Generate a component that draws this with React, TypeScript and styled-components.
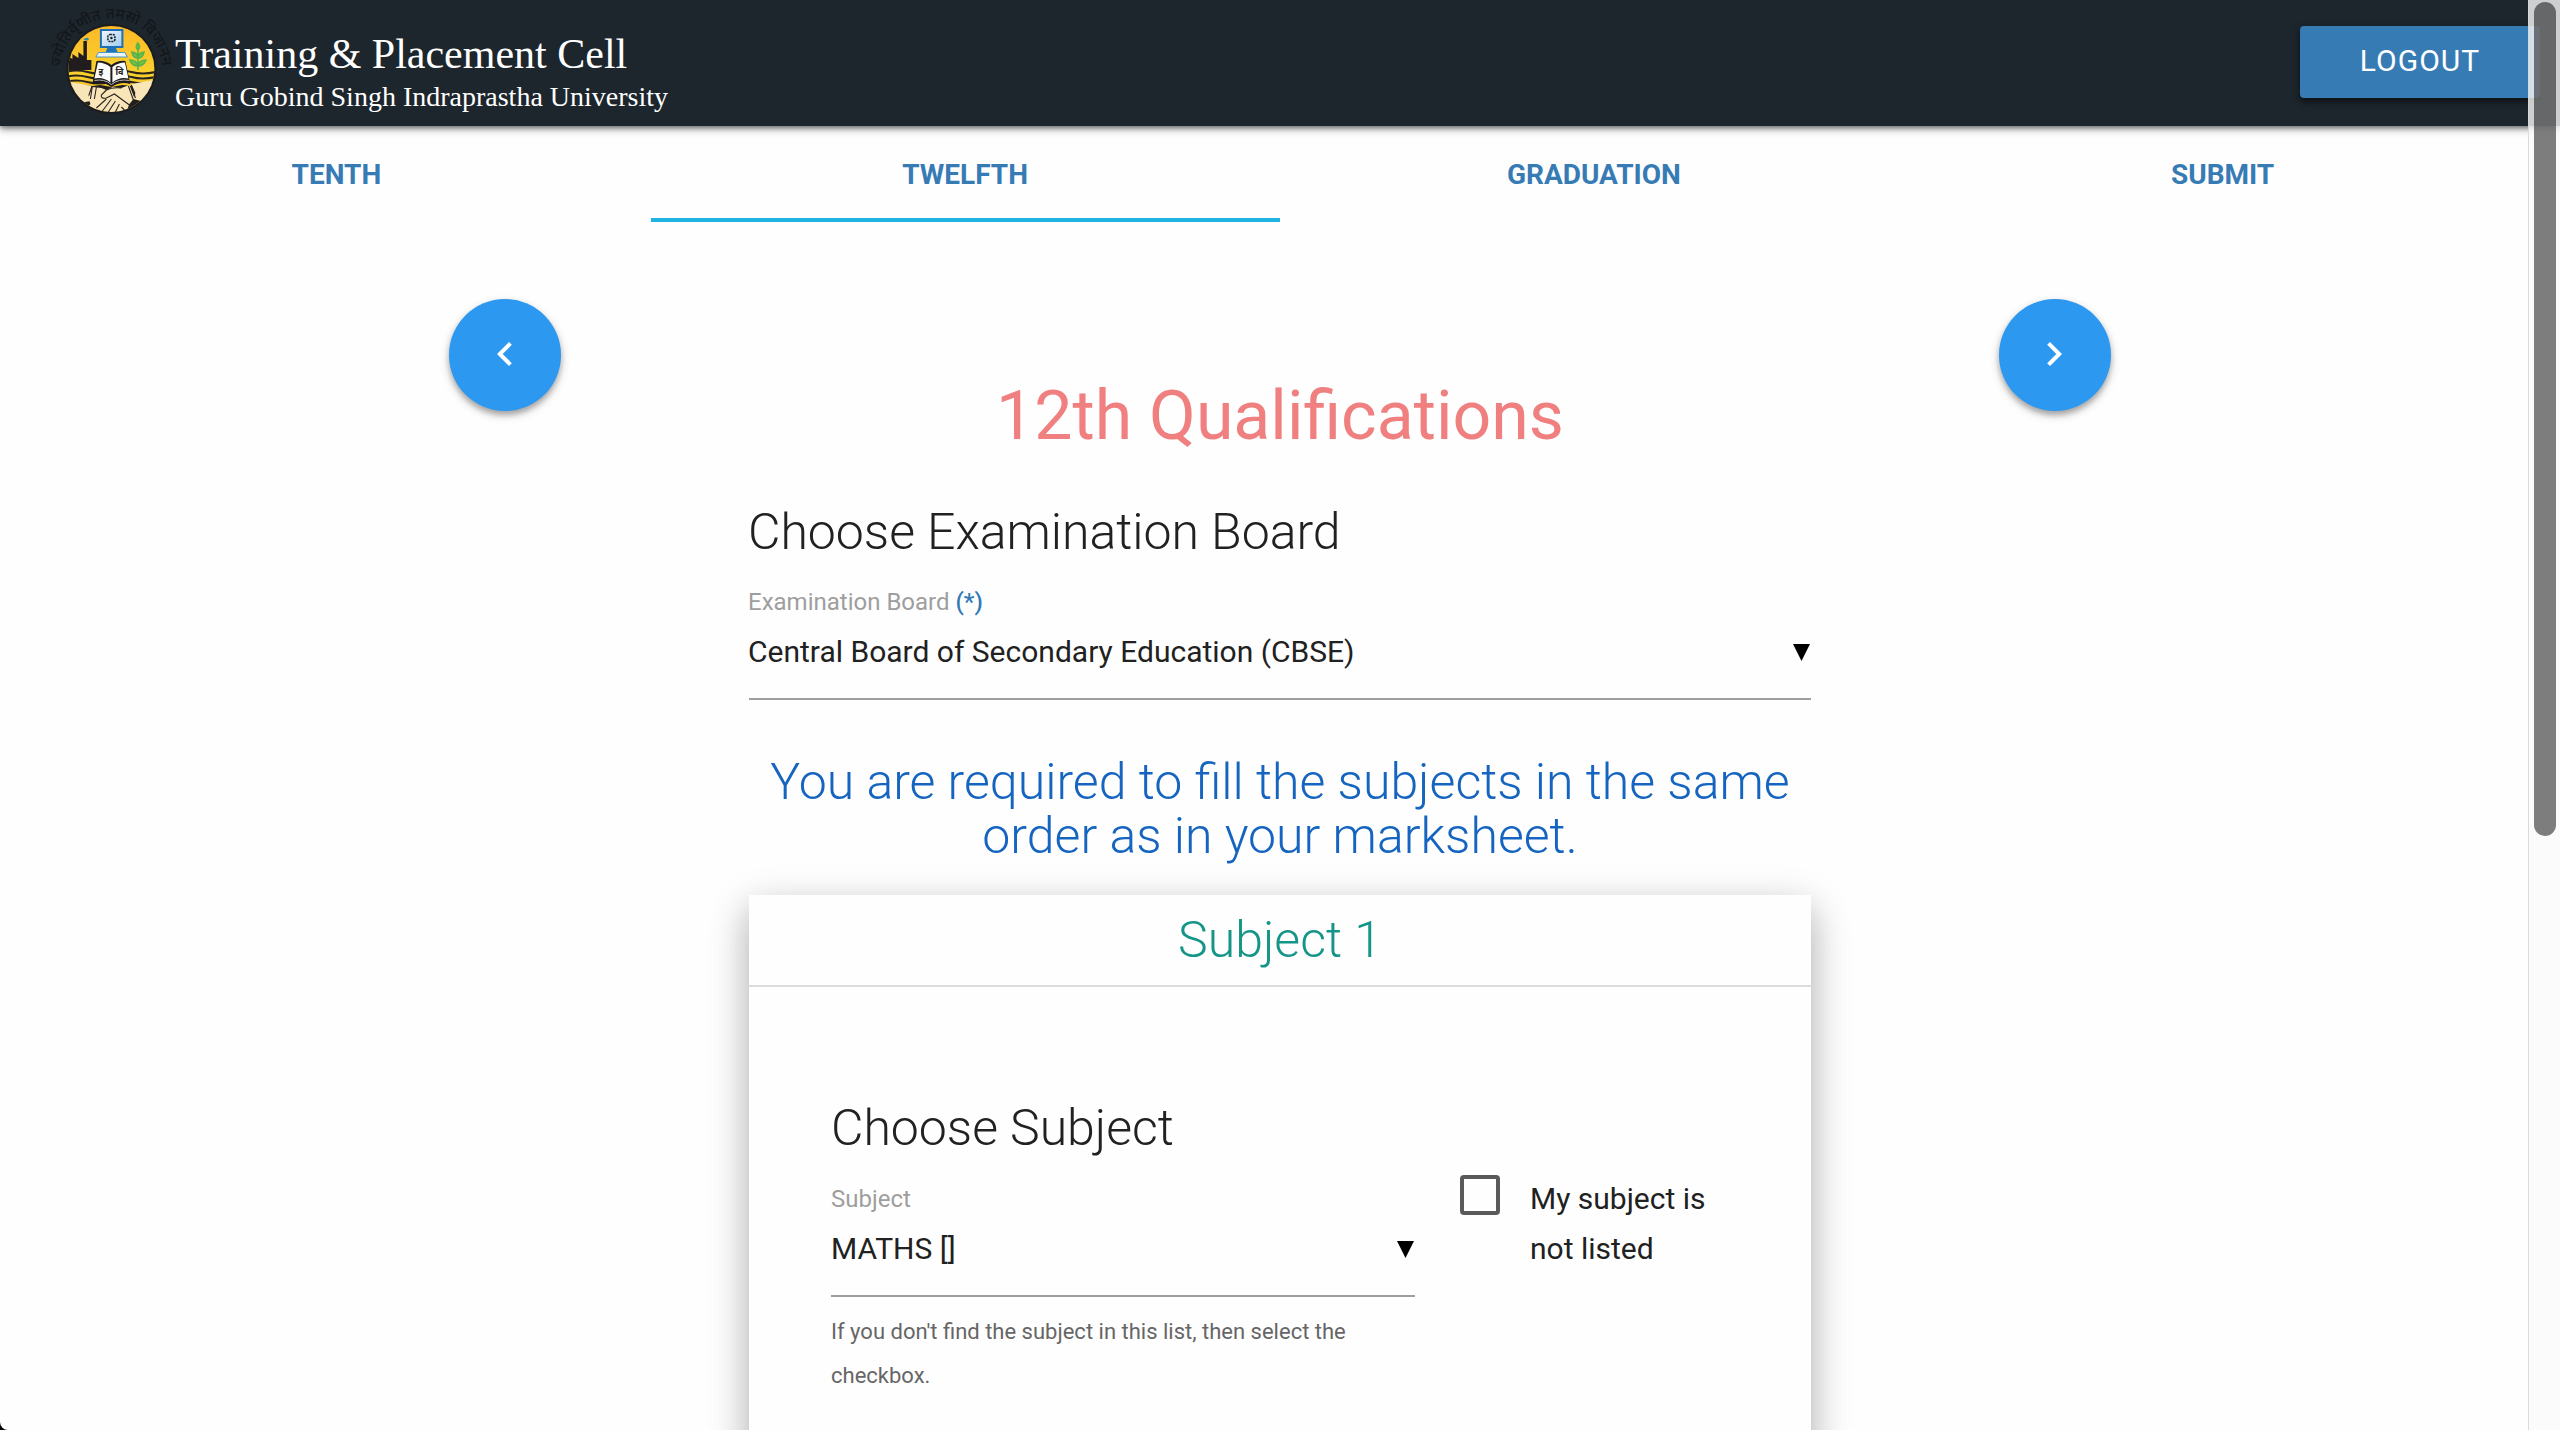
import React from "react";
import styled, { createGlobalStyle, css } from "styled-components";

const GlobalStyle = createGlobalStyle`
  *, *::before, *::after { box-sizing: border-box; }
  html, body { margin: 0; padding: 0; background: #fefefe; }
  body { font-family: Roboto, "Liberation Sans", sans-serif; color: #212121; }
`;

const Page = styled.div`
  position: relative;
  width: 2560px;
  height: 1430px;
  overflow: hidden;
  display: flex;
  flex-direction: column;
  background: #fefefe;
`;

const Header = styled.header`
  position: relative;
  flex: none;
  height: 126px;
  padding: 0 20px 0 50px;
  display: flex;
  align-items: flex-start;
  background: #1d262d;
  box-shadow: 0 3px 8px rgba(0, 0, 0, 0.38), 0 2px 4px rgba(0, 0, 0, 0.3);
`;

const LogoArt = styled.svg`
  flex: none;
  width: 125px;
  height: 126px;
  overflow: visible;
  font-family: "Noto Sans Devanagari", "Noto Sans", sans-serif;
`;

const Brand = styled.div`
  flex: 1;
  padding-top: 31px;
  color: #fff;
  font-family: "Liberation Serif", "Times New Roman", serif;
  white-space: nowrap;
`;

const BrandTitle = styled.div`
  font-size: 42px;
  line-height: 46px;
`;

const BrandSubtitle = styled.div`
  font-size: 28px;
  line-height: 39px;
`;

const LogoutButton = styled.button`
  width: 240px;
  height: 72px;
  margin: 26px 0 0;
  padding: 0 0 2px;
  border: 0;
  border-radius: 4px;
  background: #377bb5;
  color: #fff;
  font: 400 30px/70px Roboto, sans-serif;
  letter-spacing: 1px;
  box-shadow: 0 4px 10px rgba(0, 0, 0, 0.35), 0 3px 4px rgba(0, 0, 0, 0.3);
`;

const Tabs = styled.nav`
  flex: none;
  height: 96px;
  padding: 0 23px 0 22px;
  display: grid;
  grid-template-columns: repeat(4, 1fr);
`;

const Tab = styled.a<{ $active?: boolean }>`
  padding-top: 5px;
  border-bottom: 4px solid ${(p) => (p.$active ? "#1fb3e1" : "transparent")};
  color: #377bb5;
  font-size: 28px;
  font-weight: 700;
  line-height: 87px;
  text-align: center;
`;

const Main = styled.main`
  flex: 1;
  padding: 77px 449px 0;
  display: flex;
  justify-content: space-between;
  align-items: flex-start;
`;

const RoundButton = styled.button<{ $nudge?: number }>`
  flex: none;
  width: 112px;
  height: 112px;
  padding: 0 ${(p) => p.$nudge ?? 0}px 2px 0;
  border: 0;
  border-radius: 50%;
  display: flex;
  align-items: center;
  justify-content: center;
  background: #2c98f0;
  box-shadow: 0 4px 10px rgba(0, 0, 0, 0.24), 0 4px 5px rgba(0, 0, 0, 0.18);

  svg { width: 48px; height: 48px; fill: #fff; }
`;

const Form = styled.section`
  width: 1062px;
  padding-top: 79px;
`;

const PageTitle = styled.h1`
  margin: 0 0 51px;
  color: #f08080;
  font-size: 68px;
  font-weight: 400;
  line-height: 76px;
  text-align: center;
`;

const headingText = css`
  margin: 0;
  font-size: 50px;
  font-weight: 300;
  line-height: 54px;
`;

const SectionTitle = styled.h2<{ $inset?: number }>`
  ${headingText}
  letter-spacing: -0.04px;
  text-indent: ${(p) => p.$inset ?? 0}px;
`;

const Notice = styled.h2`
  ${headingText}
  margin: 55px 0 32px;
  color: #1565c0;
  text-align: center;
`;

const Label = styled.label<{ $inset?: number }>`
  display: block;
  margin: 25px 0 10px;
  color: #9e9e9e;
  font-size: 24px;
  line-height: 36px;
  text-indent: ${(p) => p.$inset ?? 0}px;
`;

const Required = styled.span`
  color: #337ab7;
  font-weight: 500;
`;

const Select = styled.div<{ $inset?: number }>`
  height: 70px;
  padding-right: 1px;
  border-bottom: 2px solid #9e9e9e;
  display: flex;
  justify-content: space-between;
  align-items: flex-start;
  font-size: 30px;
  line-height: 44px;
  text-indent: ${(p) => p.$inset ?? 0}px;

  svg { width: 17px; height: 17px; margin-top: 14px; fill: #000; }
`;

const Card = styled.section`
  height: 700px;
  background: #fefefe;
  box-shadow: 0 16px 34px rgba(0, 0, 0, 0.18), 0 12px 40px rgba(0, 0, 0, 0.17);
`;

const CardTitle = styled.h2`
  ${headingText}
  padding: 18px 0;
  border-bottom: 2px solid #dcdcdc;
  color: #159587;
  text-align: center;
`;

const CardBody = styled.div`
  padding: 114px 82px 0;
`;

const SubjectRow = styled.div`
  display: flex;
  align-items: flex-start;
`;

const SubjectField = styled.div`
  flex: none;
  width: 584px;
  margin-right: 45px;
  padding-top: 1px;
`;

const Hint = styled.p`
  margin: 13px 0 0;
  color: #666;
  font-size: 22px;
  line-height: 44px;
`;

const CheckField = styled.label`
  padding-top: 19px;
  display: flex;
  align-items: flex-start;
  gap: 30px;
  font-size: 30px;
  line-height: 50px;
`;

const CheckBox = styled.span`
  flex: none;
  width: 40px;
  height: 40px;
  margin-top: 1px;
  border: 4px solid #5a5a5a;
  border-radius: 4px;
`;

const CheckText = styled.span`
  width: 190px;
`;

const ScrollTrack = styled.div`
  position: absolute;
  top: 0;
  right: 0;
  width: 32px;
  height: 100%;
  padding: 2px 4px 0 5px;
  border-left: 1px solid rgba(215, 215, 215, 0.9);
  background: rgba(250, 250, 250, 0.8);
`;

const ScrollThumb = styled.div`
  height: 834px;
  border-radius: 11px;
  background: rgba(0, 0, 0, 0.5);
`;

const Corner = styled.svg`
  position: absolute;
  left: 0;
  bottom: 0;
  width: 8px;
  height: 8px;
`;

const Logo = () => (
  <LogoArt viewBox="50.6 0 125 126">
    <defs>
      <clipPath id="disc"><circle cx="112" cy="69" r="43" /></clipPath>
      <path id="motto" d="M61.500 69A50.500 50.500 0 0 1 162.500 69" />
      <linearGradient id="sky" x1="0" y1="0" x2="0" y2="1">
        <stop offset="0" stopColor="#fcb826" />
        <stop offset="0.55" stopColor="#f9d22e" />
        <stop offset="1" stopColor="#e9a91c" />
      </linearGradient>
      <linearGradient id="screen" x1="0" y1="0" x2="1" y2="1">
        <stop offset="0" stopColor="#f4f9fd" />
        <stop offset="1" stopColor="#9dcbee" />
      </linearGradient>
    </defs>
    <g fontSize="15" fontWeight="500" fill="#14161a" textAnchor="middle">
      <text><textPath href="#motto" startOffset="36">ज्योतिर्वृणीत</textPath></text>
      <text><textPath href="#motto" startOffset="90">तमसो</textPath></text>
      <text><textPath href="#motto" startOffset="133">विजानन</textPath></text>
    </g>
    <circle cx="112" cy="69" r="45" fill="#1b1c1e" />
    <g clipPath="url(#disc)">
      <rect x="68" y="25" width="88" height="90" fill="url(#sky)" />
      <path d="M66 72q11-3 22 0t22 0t22 0t24 0M66 77q11-3 22 0t22 0t22 0t24 0M66 82q11-3 22 0t22 0t22 0t24 0" stroke="#2b241d" strokeWidth="2.200" fill="none" />
      <path d="M68 70V56l5 3v-5l6 4v-6l5 4V41h3.500v19H92v10z" fill="#211d1e" />
      <path d="M84 40q2-3 5-2q1 2-1 2.500z" fill="#2f8ba8" />
      <path d="M138.500 70V48M138.500 66q-6 0-8-6q7 0 8 6q1-6 8-6q-2 6-8 6M138.500 58q-5 0-6-6q6 1 6 6q0-5 6-6q-1 6-6 6M138.500 50q-3-3 0-7q3 4 0 7" stroke="#56b24b" strokeWidth="1.600" fill="#79c143" />
      <path d="M62 83l31 3 8-1 11 2 11-2 10 1 30-5v36H62z" fill="#211e1e" />
      <path d="M66 81L92 86l-3 9 2 6-15 3-12-10z" fill="#f8e5b8" />
      <path d="M160 79L132 84l4 9-2 6 15 4 12-10z" fill="#f8e5b8" />
      <path d="M93 87l9 1 5 2 6-3 9 1 8-3 5 13-5 6-2 5-5 2-3 3-5 0-3 3-4-3-5 3-8-3-6 0-3-4 5-6-2-6z" fill="#f8e5b8" />
    </g>
    <path d="M93 86l-2 13M97 87l-2 12M129 86l5 14M132 85l4 13M107 90l-5 5q-1 4 5 3l8-4 15 11M107 99l-10 9M112 99l-9 12M116 101l-7 11M120 104l-4 8M122 107l3 3M107 90q6-3 15-2" stroke="#2a2422" strokeWidth="1.100" fill="none" />
    <path d="M97 61q8-1 15 4q7-5 14-4l5 23q-10-3-19 3q-8-6-19-3z" fill="#1e1a1b" />
    <path d="M98.500 62.500q7 0 12.500 4.500v15.500q-7-6-16-4z" fill="#fbfbfa" />
    <path d="M125.500 62.500q-7 0-12.500 4.500v15.500q7-6 16-4z" fill="#fbfbfa" />
    <path d="M95 80.500q10-2 17 4q7-6 18-4" stroke="#b9b9b8" strokeWidth="1" fill="none" />
    <text x="99" y="75" fontSize="9" fontWeight="700" fill="#262223">इ</text>
    <text x="116" y="75" fontSize="9" fontWeight="700" fill="#262223">वि</text>
    <rect x="101.500" y="30" width="21.500" height="17" fill="url(#screen)" stroke="#1f6fb8" strokeWidth="2" />
    <rect x="108.500" y="34.500" width="7" height="7" rx="2" fill="none" stroke="#20242a" strokeWidth="1.600" strokeDasharray="2 0.800" />
    <circle cx="112" cy="38" r="1.300" fill="#20242a" />
    <path d="M108 48h8.500l2 4.500h-12.500z" fill="#2272ba" />
    <path d="M99 52.500h26.500l2.500 4.500h-31.500z" fill="#e9f4fb" stroke="#3b8cc9" strokeWidth="0.900" />
  </LogoArt>
);

const Triangle = () => (
  <svg viewBox="0 0 17 17"><path d="M0 0h17L8.500 17z" /></svg>
);

const tabs = ["TENTH", "TWELFTH", "GRADUATION", "SUBMIT"];

export default function App() {
  return (
    <>
      <GlobalStyle />
      <Page>
        <Header>
          <Logo />
          <Brand>
            <BrandTitle>Training &amp; Placement Cell</BrandTitle>
            <BrandSubtitle>Guru Gobind Singh Indraprastha University</BrandSubtitle>
          </Brand>
          <LogoutButton>LOGOUT</LogoutButton>
        </Header>
        <Tabs>
          {tabs.map((t) => (
            <Tab key={t} $active={t === "TWELFTH"}>{t}</Tab>
          ))}
        </Tabs>
        <Main>
          <RoundButton aria-label="Previous">
            <svg viewBox="0 0 24 24"><path d="M15.410 7.410L14 6l-6 6 6 6 1.410-1.410L10.830 12z" /></svg>
          </RoundButton>
          <Form>
            <PageTitle>12th Qualifications</PageTitle>
            <SectionTitle $inset={-1}>Choose Examination Board</SectionTitle>
            <Label $inset={-1}>Examination Board <Required>(*)</Required></Label>
            <Select $inset={-1}>Central Board of Secondary Education (CBSE)<Triangle /></Select>
            <Notice>You are required to fill the subjects in the same order as in your marksheet.</Notice>
            <Card>
              <CardTitle>Subject 1</CardTitle>
              <CardBody>
                <SectionTitle>Choose Subject</SectionTitle>
                <SubjectRow>
                  <SubjectField>
                    <Label>Subject</Label>
                    <Select>MATHS []<Triangle /></Select>
                    <Hint>If you don't find the subject in this list, then select the checkbox.</Hint>
                  </SubjectField>
                  <CheckField>
                    <CheckBox />
                    <CheckText>My subject is not listed</CheckText>
                  </CheckField>
                </SubjectRow>
              </CardBody>
            </Card>
          </Form>
          <RoundButton aria-label="Next" $nudge={2}>
            <svg viewBox="0 0 24 24"><path d="M10 6L8.590 7.410 13.170 12l-4.580 4.590L10 18l6-6z" /></svg>
          </RoundButton>
        </Main>
        <ScrollTrack><ScrollThumb /></ScrollTrack>
        <Corner viewBox="0 0 8 8"><path d="M0 0A8 8 0 0 0 8 8H0z" fill="#000" /></Corner>
      </Page>
    </>
  );
}
